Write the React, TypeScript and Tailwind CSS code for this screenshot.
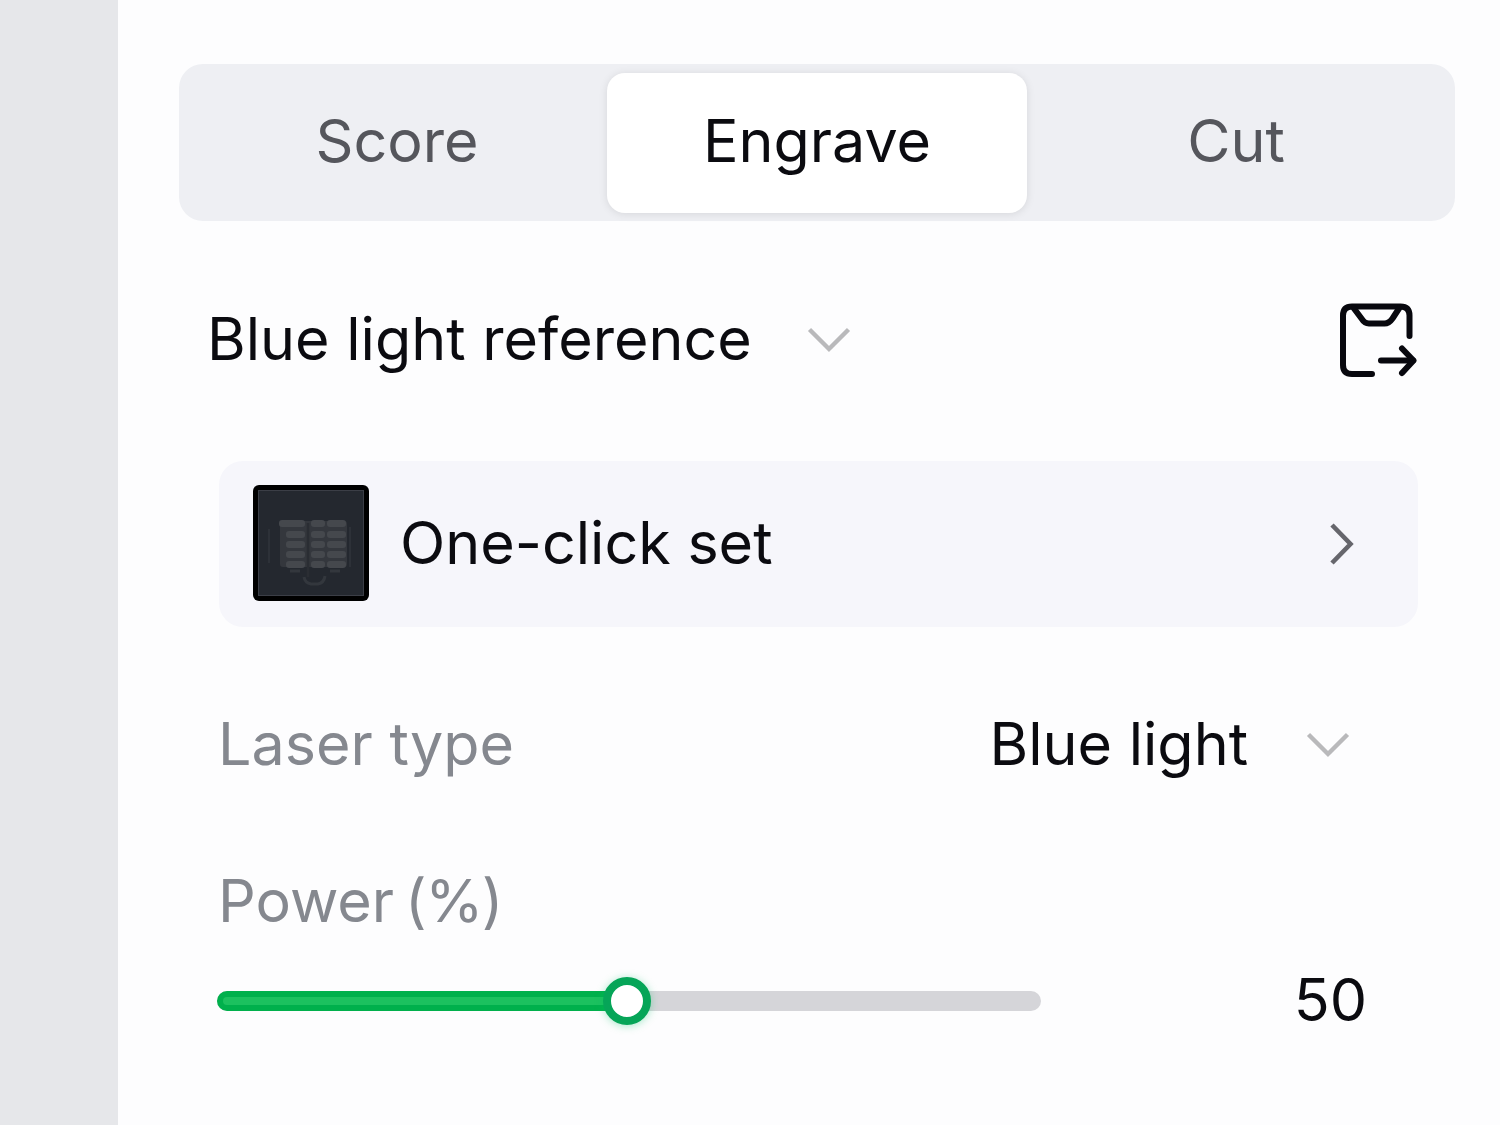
import { useState } from 'react';

const modes = [
  { name: 'Score', className: 'w-[428px] pl-[8px]' },
  { name: 'Engrave', className: 'w-[420px]' },
  { name: 'Cut', className: 'w-[418px]' },
];

function ChevronDown() {
  return (
    <svg className="h-[28px] w-[44px]" viewBox="0 0 44 28" fill="none" stroke="#b9b9bb" strokeWidth="4.4">
      <path d="M2.5 3.5 22 23 41.5 3.5" />
    </svg>
  );
}

function ChevronRight() {
  return (
    <svg className="h-[44px] w-[28px]" viewBox="0 0 28 44" fill="none" stroke="#66666c" strokeWidth="4.6">
      <path d="M4 3 22.5 22 4 41" />
    </svg>
  );
}

function SaveAsIcon() {
  return (
    <svg className="h-[80px] w-[80px]" viewBox="0 0 80 80" fill="none" stroke="#08080e" strokeWidth="6" strokeLinecap="round" strokeLinejoin="round">
      <path d="M34 74H14Q5 74 5 65V15.500Q5 6.500 14 6.500H62.500Q71.500 6.500 71.500 15.500V36" />
      <path d="M16 8.500 23.500 18.500Q26.500 23.500 31 23.500H46.500Q51 23.500 54.500 18.500L61 8.500" />
      <path d="M43 60.500H75" />
      <path d="M64 48.500 75.500 60.500 64 73" />
    </svg>
  );
}

// engraved sample shown on the material tile
function Thumbnail() {
  const rows = [35, 46, 56, 66, 76];
  return (
    <svg className="h-[118px] w-[118px]" viewBox="0 0 118 118">
      <rect x="1" y="0" width="116" height="116" rx="6" fill="#000" />
      <rect x="6.500" y="5.500" width="105" height="105" fill="#24282f" stroke="#3b3e46" />
      <rect x="28" y="36" width="67" height="46" rx="3" fill="#34373d" />
      <path d="M17 44V78M98 42V82" stroke="#2d3138" strokeWidth="2" />
      {rows.map((y) => (
        <g key={y} fill="#45484d">
          <rect x={y < 40 ? 27 : 34} y={y} width={y < 40 ? 26 : 19} height="7" rx="3" />
          <rect x="59" y={y} width="14" height="7" rx="3" />
          <rect x="75" y={y} width="19" height="7" rx="3" />
        </g>
      ))}
      <path d="M38 86H48M78 86H88M52 92Q53 98 59 99H66Q72 98 73 91" fill="none" stroke="#33373d" strokeWidth="3" />
      <path d="M56 38V92" stroke="#2a2d33" strokeWidth="2.500" />
    </svg>
  );
}

function PowerSlider({ value }: { value: number }) {
  return (
    <div className="relative h-[20px] w-[824px] rounded-full bg-[#d5d5d9]">
      <div className="h-full rounded-full border-[6px] border-[#00b04c] bg-[#1cc15f]" style={{ width: `${value}%` }} />
      <div
        className="absolute top-1/2 -ml-[2px] size-[48px] -translate-x-1/2 -translate-y-1/2 rounded-full border-[8px] border-[#06a558] bg-white shadow-[0_1px_8px_rgba(0,190,100,0.35)]"
        style={{ left: `${value}%` }}
      />
    </div>
  );
}

export default function App() {
  const [mode, setMode] = useState('Engrave');
  const [power] = useState(50);

  return (
    <div className="flex h-[1125px] w-[1500px] overflow-hidden bg-[#fdfdfe] font-['Inter',sans-serif] text-[59.2px] leading-[72px] text-[#0b0b10]">
      <aside className="w-[118px] shrink-0 bg-[#e6e7ea]" />
      <main className="flex flex-1 flex-col pt-[64px]">
        <div className="ml-[61px] flex h-[157px] w-[1276px] items-center rounded-[24px] bg-[#eeeff3]">
          {modes.map((m) => (
            <button
              key={m.name}
              onClick={() => setMode(m.name)}
              className={`${m.className} h-[140px] shrink-0 rounded-[18px] pb-[3px] ${
                mode === m.name ? 'bg-white shadow-[0_1px_8px_rgba(0,0,0,0.1)]' : 'text-[#55565c]'
              }`}
            >
              {m.name}
            </button>
          ))}
        </div>

        <div className="mt-[79px] ml-[89px] flex h-[80px] w-[1211px] items-center">
          <span className="pb-[2px]">Blue light reference</span>
          <span className="ml-[55px]">
            <ChevronDown />
          </span>
          <span className="ml-auto">
            <SaveAsIcon />
          </span>
        </div>

        <button className="mt-[81px] ml-[101px] flex h-[166px] w-[1199px] items-center rounded-[24px] bg-[#f6f6fb] pr-[62px] pl-[33px]">
          <Thumbnail />
          <span className="ml-[30px] pb-[3px]">One-click set</span>
          <span className="ml-auto">
            <ChevronRight />
          </span>
        </button>

        <div className="mt-[82px] ml-[100px] flex h-[72px] w-[1132px] items-center">
          <span className="pb-[2px] text-[#85888f]">Laser type</span>
          <span className="ml-auto pb-[2px]">Blue light</span>
          <span className="ml-[58px]">
            <ChevronDown />
          </span>
        </div>

        <div className="mt-[84px] ml-[100px] flex h-[72px] text-[#85888f]">
          <span>Power</span>
          <span className="ml-[11px] tracking-[-1.5px]">(%)</span>
        </div>

        <div className="mt-[28px] ml-[99px] flex h-[72px] w-[1150px] items-center">
          <PowerSlider value={power} />
          <span className="ml-auto pb-[2px]">{power}</span>
        </div>
      </main>
    </div>
  );
}
